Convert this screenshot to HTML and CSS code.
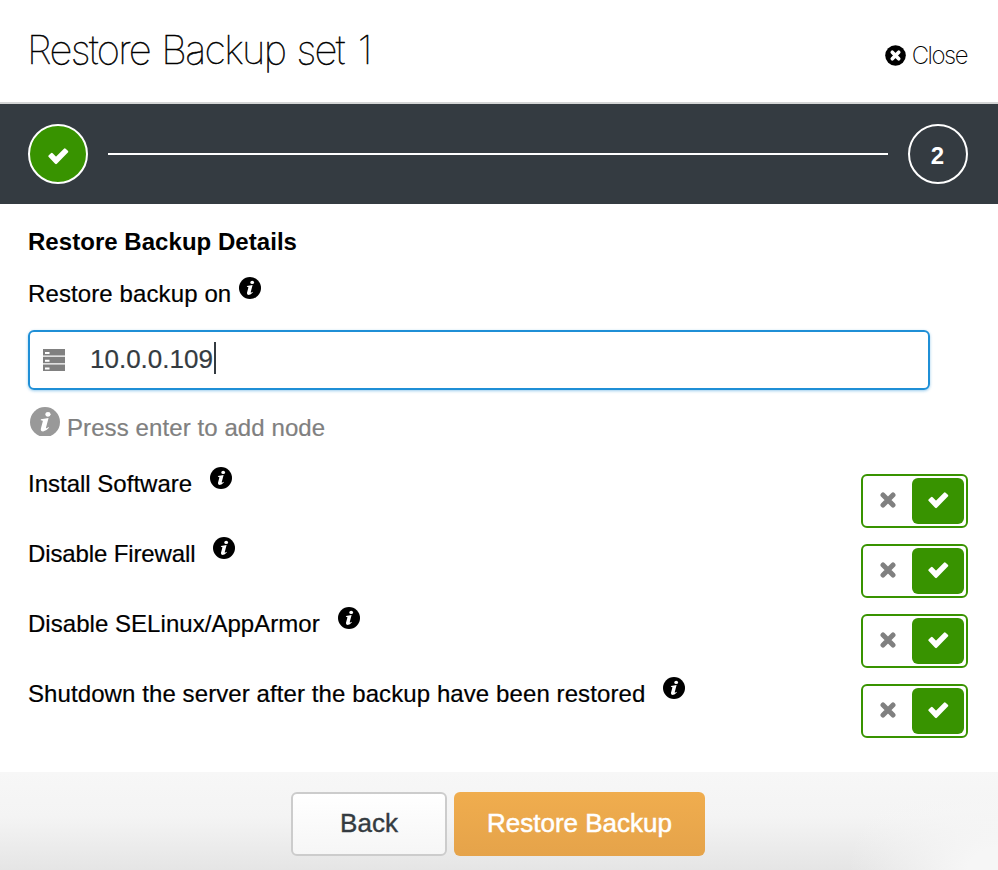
FILE: index.html
```html
<!DOCTYPE html>
<html lang="en">
<head>
<meta charset="utf-8">
<title>Restore Backup set 1</title>
<link rel="stylesheet" href="styles.css">
</head>
<body>
<svg class="sprite" aria-hidden="true">
  <symbol id="info" viewBox="0 0 22 22">
    <circle cx="11" cy="11" r="11" fill="currentColor"/>
    <ellipse cx="13.2" cy="5.4" rx="1.9" ry="1.7" fill="#fff"/>
    <path d="M8 9 13.6 8.1 11.7 15.2Q11.6 16.2 13.5 14.7L13.9 15.2Q11.9 17.8 9.6 17.9 7.5 17.8 8 15.7L9.4 10.5Q9.5 9.8 7.9 9.8Z" fill="#fff"/>
  </symbol>
  <symbol id="check" viewBox="0 0 21 17">
    <path d="M1.6 8.2 3.8 6 8 10.4 16.8 1.5 19 3.7 8 15Z" fill="currentColor" stroke="currentColor" stroke-width="2.4" stroke-linejoin="round"/>
  </symbol>
  <symbol id="cross" viewBox="0 0 16 16">
    <path d="M3 3 13 13M13 3 3 13" fill="none" stroke="currentColor" stroke-width="5" stroke-linecap="round"/>
  </symbol>
  <symbol id="close" viewBox="0 0 21 21">
    <circle cx="10.5" cy="10.5" r="10.3" fill="currentColor"/>
    <path d="M7.3 7.3 13.7 13.7M13.7 7.3 7.3 13.7" fill="none" stroke="#fff" stroke-width="3.7" stroke-linecap="round"/>
  </symbol>
  <symbol id="servers" viewBox="0 0 22 22">
    <path d="M0 0H22V6.4H0ZM0 7.8H22V14.2H0ZM0 15.6H22V22H0Z" fill="currentColor"/>
    <path d="M2 3H6.5V5H2ZM2 10.8H6.5V12.8H2ZM2 18.4H6.5V20.4H2Z" fill="#fff"/>
  </symbol>
</svg>

<header class="header">
  <h1 class="title">Restore Backup set <span class="num">1</span></h1>
  <a class="close"><svg class="close-icon"><use href="#close"/></svg><span class="close-text">Close</span></a>
</header>

<nav class="steps">
  <span class="step done"><svg class="step-check"><use href="#check"/></svg></span>
  <span class="line"></span>
  <span class="step current">2</span>
</nav>

<main class="content">
  <h2 class="heading">Restore Backup Details</h2>
  <div class="label"><span class="t-on">Restore backup on</span><svg class="info"><use href="#info"/></svg></div>
  <div class="input">
    <svg class="servers"><use href="#servers"/></svg>
    <span class="value">10.0.0.109</span><span class="caret"></span>
  </div>
  <div class="hint"><span class="hint-clip"><svg class="hint-icon"><use href="#info"/></svg></span><span class="t-hint">Press enter to add node</span></div>
  <div class="row">
    <div class="label"><span class="t-install">Install Software</span><svg class="info"><use href="#info"/></svg></div>
    <div class="toggle"><span class="off"><svg class="cross"><use href="#cross"/></svg></span><span class="on"><svg class="check"><use href="#check"/></svg></span></div>
  </div>
  <div class="row">
    <div class="label"><span class="t-firewall">Disable Firewall</span><svg class="info"><use href="#info"/></svg></div>
    <div class="toggle"><span class="off"><svg class="cross"><use href="#cross"/></svg></span><span class="on"><svg class="check"><use href="#check"/></svg></span></div>
  </div>
  <div class="row">
    <div class="label"><span class="t-selinux">Disable SELinux/AppArmor</span><svg class="info"><use href="#info"/></svg></div>
    <div class="toggle"><span class="off"><svg class="cross"><use href="#cross"/></svg></span><span class="on"><svg class="check"><use href="#check"/></svg></span></div>
  </div>
  <div class="row">
    <div class="label"><span class="t-shutdown">Shutdown the server after the backup have been restored</span><svg class="info"><use href="#info"/></svg></div>
    <div class="toggle"><span class="off"><svg class="cross"><use href="#cross"/></svg></span><span class="on"><svg class="check"><use href="#check"/></svg></span></div>
  </div>
</main>

<footer class="footer">
  <button class="btn back">Back</button>
  <button class="btn primary">Restore Backup</button>
</footer>
</body>
</html>
```

FILE: styles.css
```css
* { box-sizing: border-box; }
body {
  margin: 0;
  height: 870px;
  display: flex;
  flex-direction: column;
  overflow: hidden;
  background: #fff;
  color: #000;
  font: 24px/30px "Liberation Sans", Arial, sans-serif;
}
svg { display: block; flex: none; }
.sprite { position: absolute; width: 0; height: 0; }

.header {
  height: 104px;
  flex: none;
  display: flex;
  justify-content: space-between;
  padding: 0 31px 0 27px;
  border-bottom: 2px solid #d4d5d5;
  font-family: Inter, sans-serif;
}
.title {
  margin: 26px 0 0;
  font-size: 40px;
  line-height: 48px;
  font-weight: 100;
  letter-spacing: -1.65px;
  word-spacing: 1.5px;
  white-space: nowrap;
  -webkit-text-stroke: .5px #000;
}
.num { margin-left: 3px; }
.close { display: flex; margin-top: 40px; gap: 6px; font-weight: 200; letter-spacing: -1.5px; }
.close-icon { width: 21px; height: 21px; margin-top: 5px; }
.close-text { padding-top: 1px; }

.steps {
  height: 100px;
  flex: none;
  display: flex;
  align-items: center;
  gap: 20px;
  padding: 0 30px 0 28px;
  background: #343b41;
}
.step {
  width: 60px;
  height: 60px;
  display: flex;
  align-items: center;
  justify-content: center;
  border: 2px solid #fff;
  border-radius: 50%;
  color: #fff;
  font-weight: bold;
}
.current { padding: 4px 1px 0 0; }
.done { background: #389300; }
.step-check { width: 21px; height: 17px; margin-top: 4px; }
.line { flex: 1; height: 2px; background: #fff; }

.content { flex: none; height: 568px; padding: 23px 30px 0 28px; }
.heading { margin: 0 0 22px; font-size: 24px; line-height: 30px; letter-spacing: .04px; }
.label { display: flex; height: 30px; gap: 18px; white-space: nowrap; -webkit-text-stroke: .2px #000; }
.content > .label { margin-bottom: 21px; gap: 8px; }
.info { width: 22px; height: 22px; margin-top: -2px; -webkit-text-stroke: 0; }
.t-on { letter-spacing: .11px; }
.t-firewall { letter-spacing: -.12px; }
.t-selinux { letter-spacing: .04px; }
.t-shutdown { letter-spacing: .09px; }
.row .info { margin-top: -1.7px; }
.input {
  width: 902px;
  height: 60px;
  display: flex;
  align-items: center;
  padding-left: 13px;
  border: 2px solid #1f8fd6;
  border-radius: 6px;
  box-shadow: 0 1px 3px rgba(31, 143, 214, .45);
  color: #343b41;
}
.servers { width: 22px; height: 22px; color: #808080; }
.value { margin: 0 0 2px 25px; font-size: 26px; -webkit-text-stroke: .2px #343b41; }
.caret { width: 2px; height: 32px; margin: 0 0 4px 1px; background: #343b41; }
.hint { display: flex; height: 67px; padding: 16px 0 0 2px; gap: 7px; color: #808080; }
.hint-clip { width: 30px; height: 30px; padding-top: 1px; overflow: hidden; }
.hint-icon { width: 30px; height: 30px; color: #999; }
.t-hint { padding-top: 7px; letter-spacing: .09px; -webkit-text-stroke: .2px #808080; }
.row { display: flex; justify-content: space-between; height: 70px; padding-top: 12px; }
.toggle {
  width: 107px;
  height: 54px;
  margin-top: 5px;
  display: flex;
  padding: 2px;
  border: 2px solid #389300;
  border-radius: 6px;
}
.off { width: 47px; height: 46px; padding: 14px 0 0 15px; color: #808080; }
.on { width: 52px; height: 46px; padding: 14px 0 0 16px; border-radius: 6px; background: #389300; color: #fff; }
.cross { width: 16px; height: 16px; }
.check { width: 21px; height: 17px; }

.footer {
  height: 98px;
  flex: none;
  display: flex;
  gap: 7px;
  padding: 20px 0 0 291px;
  background:
    radial-gradient(ellipse 150px 110px at 100% 100%, #f6f6f6 0 20%, rgba(246, 246, 246, 0) 100%),
    linear-gradient(#f7f7f7 0%, #f4f4f4 45%, #e5e5e5 100%);
}
.btn {
  height: 64px;
  padding: 0 0 2px;
  border-radius: 6px;
  font: 26px/30px "Liberation Sans", Arial, sans-serif;
  white-space: nowrap;
}
.back { width: 156px; border: 2px solid #ccc; background: linear-gradient(#fff, #f6f6f6); color: #343b41; -webkit-text-stroke: .4px #343b41; }
.primary { width: 251px; border: 0; background: linear-gradient(#f0ad4e, #e5a34a); color: #fff; -webkit-text-stroke: .5px #fff; }
```
